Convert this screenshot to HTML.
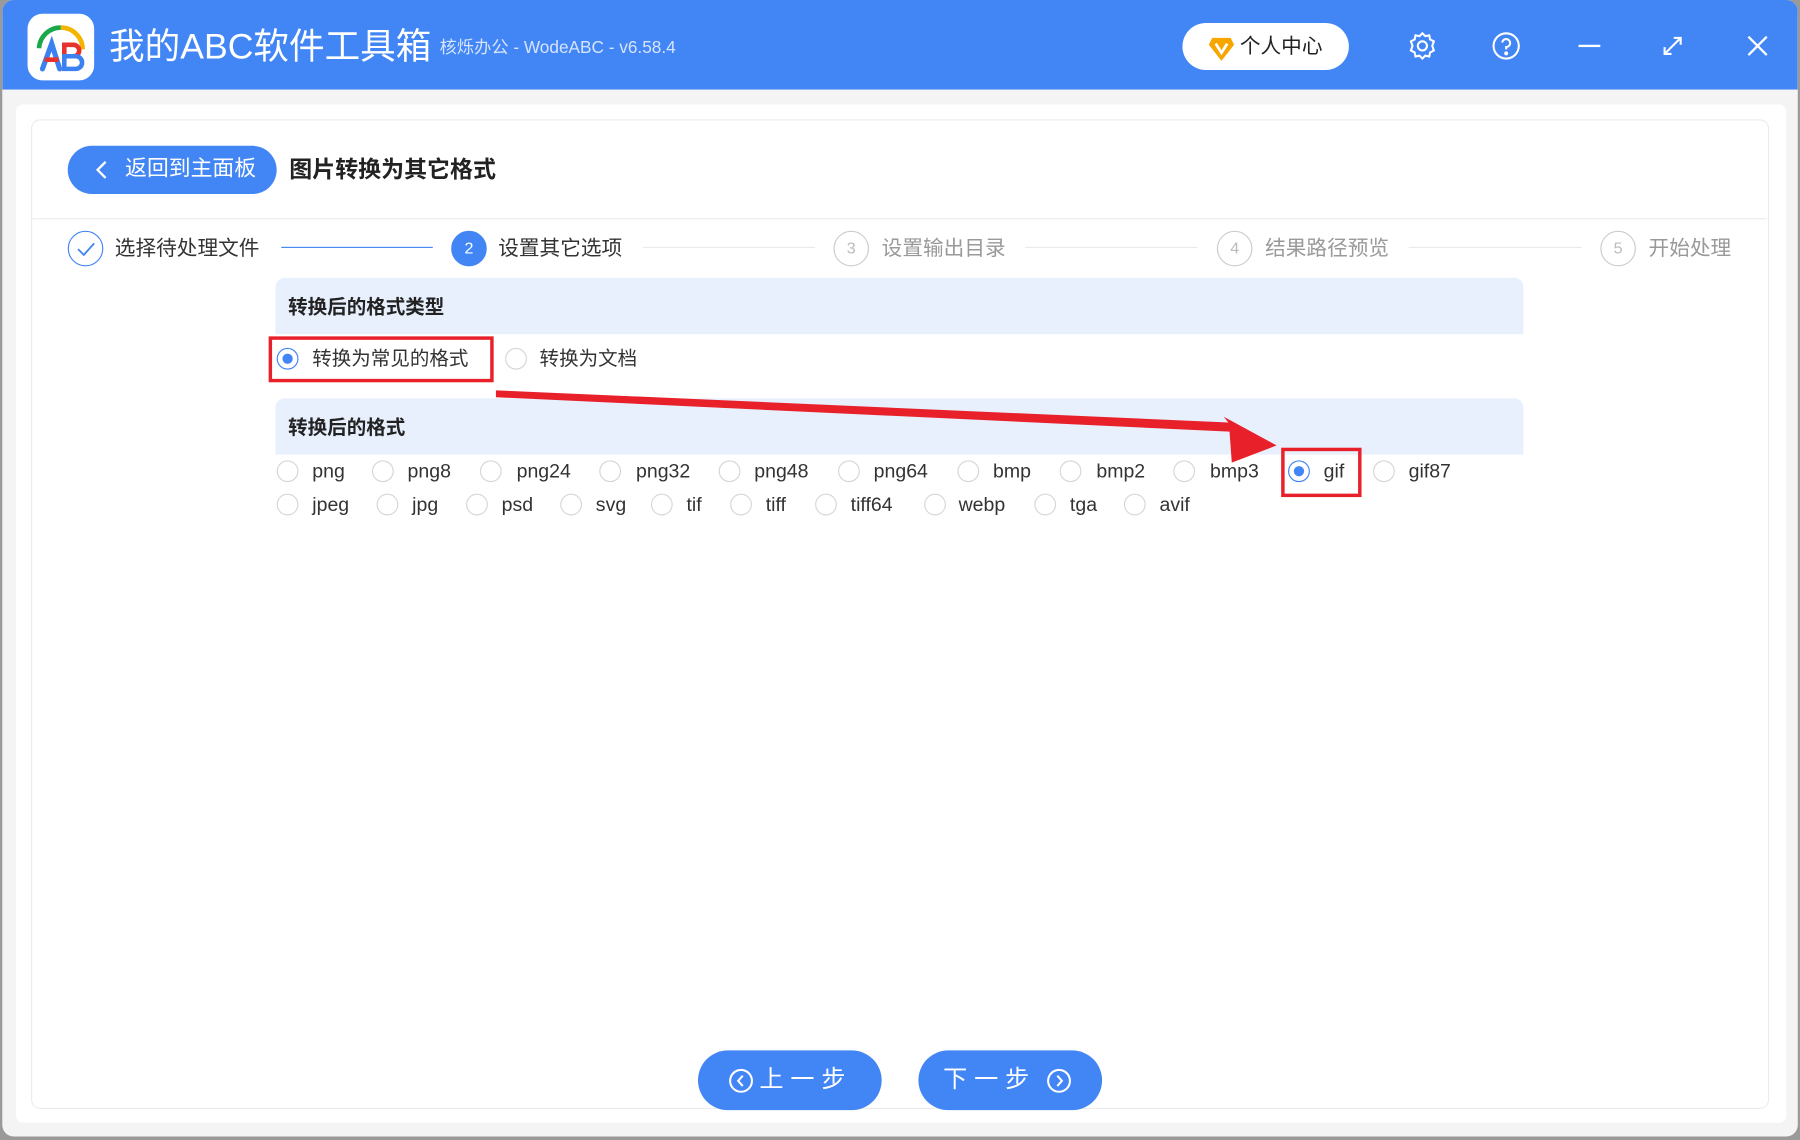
<!DOCTYPE html>
<html><head><meta charset="utf-8"><style>
*{margin:0;padding:0;box-sizing:border-box}
html,body{width:1800px;height:1140px;overflow:hidden;background:#9a9a9a}
body{font-family:"Liberation Sans","Noto Sans CJK SC",sans-serif}
#w{position:absolute;left:0;top:0;width:1568px;height:993px;transform:scale(1.148);transform-origin:0 0}
.a{position:absolute}
.win{left:2px;top:0;width:1564px;height:990px;background:#f4f4f4;border-radius:10px;overflow:hidden}
.hdr{left:0;top:0;width:1564px;height:78px;background:#4286f5}
.t{white-space:nowrap;line-height:1}
.rad{position:absolute;width:19px;height:19px;border-radius:50%;border:1px solid #d6d6d6;background:#fff}
.rad.on{border-color:#4286f5}
.rad.on:after{content:"";position:absolute;left:4px;top:4px;width:9px;height:9px;border-radius:50%;background:#4286f5}
.lbl{position:absolute;font-size:17px;color:#333;white-space:nowrap;line-height:1}
.sc{position:absolute;width:31px;height:31px;border-radius:50%;border:1px solid #ccc;color:#bbb;font-size:14px;text-align:center;line-height:29px}
.st{position:absolute;font-size:18px;color:#999;line-height:1;white-space:nowrap}
.btn{position:absolute;background:#4286f5;border-radius:26px;color:#fff;font-size:21px;line-height:52px;text-align:center;letter-spacing:6px}
</style></head><body><div id="w">
<div class="a win">
 <div class="a hdr"></div>
 <div class="a" style="left:22px;top:12px;width:58px;height:58px;background:#fff;border-radius:13px"></div>
 <svg class="a" style="left:22px;top:12px" width="58" height="58" viewBox="0 0 58 58">
  <path d="M10 30 A19 19 0 0 1 29 12" stroke="#1aa84a" stroke-width="4" fill="none"/>
  <path d="M29 12 A19 19 0 0 1 48 31" stroke="#f5b400" stroke-width="4" fill="none"/>
  <path d="M13 48 L21 26 L28 48" stroke="#3b82f0" stroke-width="4.5" fill="none" stroke-linecap="round"/>
  <path d="M15 40 H27" stroke="#e8322e" stroke-width="4"/>
  <path d="M32 27 H40 A5 5 0 0 1 40 37 H32 Z" fill="none" stroke="#e8322e" stroke-width="4"/>
  <path d="M32 37 H42 A5.5 5.5 0 0 1 42 48 H32 Z" fill="none" stroke="#3b82f0" stroke-width="4"/>
 </svg>
 <div class="a t" style="left:93px;top:25px;font-size:31px;color:#fff">我的ABC软件工具箱</div>
 <div class="a t" style="left:381px;top:34px;font-size:15px;color:#d6e4fd">核烁办公 - WodeABC - v6.58.4</div>
 <div class="a" style="left:1028px;top:20px;width:145px;height:41px;background:#fff;border-radius:21px"></div>
 <svg class="a" style="left:1050px;top:30px" width="24" height="24" viewBox="0 0 24 24"><path d="M4 3 H20 L23 9 L12 23 L1 9 Z" fill="#f7a600"/><path d="M7 8 L12 16 L17 8" stroke="#fff" stroke-width="2.4" fill="none"/></svg>
 <div class="a t" style="left:1078px;top:31px;font-size:18px;color:#222">个人中心</div>
 <svg class="a" style="left:1224px;top:27px" width="26" height="26" viewBox="0 0 26 26" fill="none" stroke="#fff" stroke-width="1.8"><path d="M13 2 L15.5 4.5 L19 3.8 L19.7 7.3 L23 9 L21.6 13 L23 17 L19.7 18.7 L19 22.2 L15.5 21.5 L13 24 L10.5 21.5 L7 22.2 L6.3 18.7 L3 17 L4.4 13 L3 9 L6.3 7.3 L7 3.8 L10.5 4.5 Z"/><circle cx="13" cy="13" r="4"/></svg>
 <svg class="a" style="left:1297px;top:27px" width="26" height="26" viewBox="0 0 26 26" fill="none" stroke="#fff" stroke-width="1.8"><circle cx="13" cy="13" r="11"/><path d="M9.5 10 A3.5 3.5 0 1 1 13 14 V16"/><circle cx="13" cy="19.5" r="0.8" fill="#fff"/></svg>
 <div class="a" style="left:1373px;top:39px;width:19px;height:2px;background:#fff"></div>
 <svg class="a" style="left:1444px;top:29px" width="22" height="22" viewBox="0 0 22 22" fill="none" stroke="#fff" stroke-width="1.8"><path d="M4 18 L18 4 M12 4 H18 V10 M4 12 V18 H10"/></svg>
 <svg class="a" style="left:1518px;top:29px" width="22" height="22" viewBox="0 0 22 22" stroke="#fff" stroke-width="2"><path d="M3 3 L19 19 M19 3 L3 19"/></svg>
 <div class="a" style="left:12px;top:91px;width:1542px;height:887px;background:#fff;border-radius:6px"></div>
 <div class="a" style="left:25px;top:104px;width:1514px;height:862px;background:#fff;border:1px solid #ececec;border-radius:8px"></div>
</div>
<div class="a" style="left:59px;top:127px;width:182px;height:42px;background:#4286f5;border-radius:21px"></div>
<svg class="a" style="left:82px;top:139px" width="14" height="18" viewBox="0 0 14 18"><path d="M10 2 L3 9 L10 16" stroke="#fff" stroke-width="2" fill="none"/></svg>
<div class="a t" style="left:109px;top:138px;font-size:19px;color:#fff">返回到主面板</div>
<div class="a t" style="left:252px;top:138px;font-size:20px;color:#222;font-weight:bold">图片转换为其它格式</div>
<div class="a" style="left:27px;top:190px;width:1512px;height:1px;background:#ececec"></div>
<div class="sc" style="left:59px;top:201px;border-color:#4286f5"><svg width="18" height="14" viewBox="0 0 18 14" style="margin-top:8px"><path d="M2 7 L7 12 L16 2" stroke="#4286f5" stroke-width="1.6" fill="none"/></svg></div>
<div class="st" style="left:100px;top:207px;color:#333">选择待处理文件</div>
<div class="a" style="left:245px;top:215px;width:132px;height:1px;background:#4286f5"></div>
<div class="sc" style="left:393px;top:201px;background:#4286f5;border-color:#4286f5;color:#fff">2</div>
<div class="st" style="left:434px;top:207px;color:#333">设置其它选项</div>
<div class="a" style="left:560px;top:215px;width:150px;height:1px;background:#eaeaea"></div>
<div class="sc" style="left:726px;top:201px">3</div>
<div class="st" style="left:768px;top:207px">设置输出目录</div>
<div class="a" style="left:893px;top:215px;width:150px;height:1px;background:#eaeaea"></div>
<div class="sc" style="left:1060px;top:201px">4</div>
<div class="st" style="left:1102px;top:207px">结果路径预览</div>
<div class="a" style="left:1227px;top:215px;width:151px;height:1px;background:#eaeaea"></div>
<div class="sc" style="left:1394px;top:201px">5</div>
<div class="st" style="left:1436px;top:207px">开始处理</div>

<div class="a" style="left:240px;top:242px;width:1087px;height:49px;background:#e8effd;border-radius:8px 8px 0 0"></div>
<div class="a t" style="left:251px;top:259px;font-size:17px;font-weight:bold;color:#222">转换后的格式类型</div>
<div class="rad on" style="left:241px;top:303px"></div><div class="lbl" style="left:272px;top:304px">转换为常见的格式</div>
<div class="rad" style="left:440px;top:303px"></div><div class="lbl" style="left:470px;top:304px">转换为文档</div>
<div class="a" style="left:234px;top:293px;width:196px;height:40px;border:3px solid #e8202a"></div>

<div class="a" style="left:240px;top:347px;width:1087px;height:49px;background:#e8effd;border-radius:8px 8px 0 0"></div>
<div class="a t" style="left:251px;top:364px;font-size:17px;font-weight:bold;color:#222">转换后的格式</div>

<div class="rad" style="left:241px;top:401px"></div><div class="lbl" style="left:272px;top:402px">png</div>
<div class="rad" style="left:324px;top:401px"></div><div class="lbl" style="left:355px;top:402px">png8</div>
<div class="rad" style="left:418px;top:401px"></div><div class="lbl" style="left:450px;top:402px">png24</div>
<div class="rad" style="left:522px;top:401px"></div><div class="lbl" style="left:554px;top:402px">png32</div>
<div class="rad" style="left:626px;top:401px"></div><div class="lbl" style="left:657px;top:402px">png48</div>
<div class="rad" style="left:730px;top:401px"></div><div class="lbl" style="left:761px;top:402px">png64</div>
<div class="rad" style="left:834px;top:401px"></div><div class="lbl" style="left:865px;top:402px">bmp</div>
<div class="rad" style="left:923px;top:401px"></div><div class="lbl" style="left:955px;top:402px">bmp2</div>
<div class="rad" style="left:1022px;top:401px"></div><div class="lbl" style="left:1054px;top:402px">bmp3</div>
<div class="rad on" style="left:1122px;top:401px"></div><div class="lbl" style="left:1153px;top:402px">gif</div>
<div class="rad" style="left:1196px;top:401px"></div><div class="lbl" style="left:1227px;top:402px">gif87</div>

<div class="rad" style="left:241px;top:430px"></div><div class="lbl" style="left:272px;top:431px">jpeg</div>
<div class="rad" style="left:328px;top:430px"></div><div class="lbl" style="left:359px;top:431px">jpg</div>
<div class="rad" style="left:406px;top:430px"></div><div class="lbl" style="left:437px;top:431px">psd</div>
<div class="rad" style="left:488px;top:430px"></div><div class="lbl" style="left:519px;top:431px">svg</div>
<div class="rad" style="left:567px;top:430px"></div><div class="lbl" style="left:598px;top:431px">tif</div>
<div class="rad" style="left:636px;top:430px"></div><div class="lbl" style="left:667px;top:431px">tiff</div>
<div class="rad" style="left:710px;top:430px"></div><div class="lbl" style="left:741px;top:431px">tiff64</div>
<div class="rad" style="left:805px;top:430px"></div><div class="lbl" style="left:835px;top:431px">webp</div>
<div class="rad" style="left:901px;top:430px"></div><div class="lbl" style="left:932px;top:431px">tga</div>
<div class="rad" style="left:979px;top:430px"></div><div class="lbl" style="left:1010px;top:431px">avif</div>
<div class="a" style="left:1116px;top:390px;width:70px;height:43px;border:3px solid #e8202a"></div>

<svg class="a" style="left:0;top:0" width="1568" height="993"><path d="M432 340 L1070 368 L1066 363 L1112 388 L1073 403 L1071 376 L432 346 Z" fill="#e8202a"/></svg>

<div class="btn" style="left:608px;top:915px;width:160px;height:52px;padding-left:28px">上一步</div>
<svg class="a" style="left:634px;top:930px" width="23" height="23" viewBox="0 0 23 23" fill="none" stroke="#fff" stroke-width="1.8"><circle cx="11.5" cy="11.5" r="9.5"/><path d="M13 7 L9 11.5 L13 16"/></svg>
<div class="btn" style="left:800px;top:915px;width:160px;height:52px;padding-right:36px">下一步</div>
<svg class="a" style="left:911px;top:930px" width="23" height="23" viewBox="0 0 23 23" fill="none" stroke="#fff" stroke-width="1.8"><circle cx="11.5" cy="11.5" r="9.5"/><path d="M10 7 L14 11.5 L10 16"/></svg>
</div></body></html>
